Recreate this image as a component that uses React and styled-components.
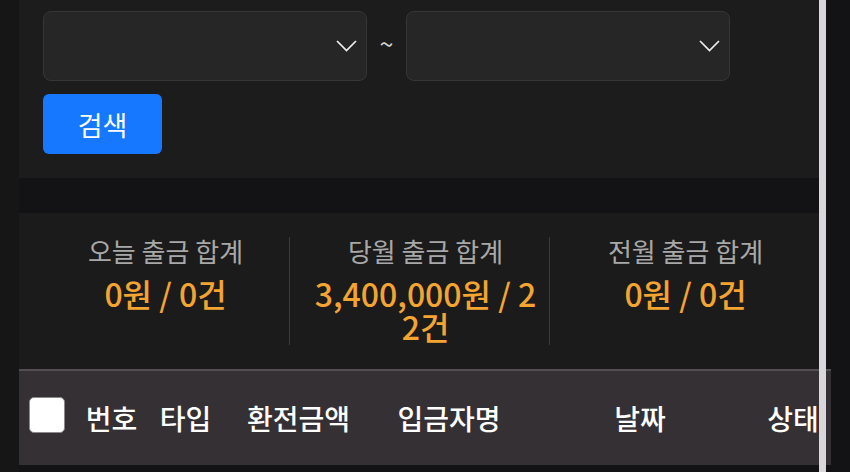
import React from "react";
import styled, { createGlobalStyle } from "styled-components";

const GlobalStyle = createGlobalStyle`
  body {
    margin: 0;
    background: #131214;
    font-family: "Noto Sans CJK KR", "Noto Sans", sans-serif;
    overflow: hidden;
  }
`;

const stats = [
  { label: "오늘 출금 합계", value: "0원 / 0건" },
  { label: "당월 출금 합계", value: "3,400,000원 / 22건" },
  { label: "전월 출금 합계", value: "0원 / 0건" },
];

const columns = [
  { title: "번호", width: 75 },
  { title: "타입", width: 73 },
  { title: "환전금액", width: 153 },
  { title: "입금자명", width: 148 },
  { title: "날짜", width: 234 },
  { title: "상태", width: 72 },
];

const Chevron = () => (
  <svg width="21" height="12" viewBox="0 0 21 12">
    <polyline points="1,1 10.5,10.5 20,1" fill="none" stroke="#eeeeee" strokeWidth="1.7" />
  </svg>
);

const App = () => {
  return (
    <Page>
      <GlobalStyle />
      <Rail />
      <Main>
        <FilterPanel>
          <SelectRow>
            <SelectBox>
              <Chevron />
            </SelectBox>
            <Tilde>~</Tilde>
            <SelectBox>
              <Chevron />
            </SelectBox>
          </SelectRow>
          <SearchButton>검색</SearchButton>
        </FilterPanel>

        <StatsPanel>
          {stats.map((s, i) => (
            <StatCol key={s.label} $first={i === 0}>
              <StatLabel>{s.label}</StatLabel>
              <StatValue>{s.value}</StatValue>
            </StatCol>
          ))}
        </StatsPanel>

        <TableHead>
          <CheckCell>
            <CheckBox />
          </CheckCell>
          {columns.map((c) => (
            <HeadCell key={c.title} $width={c.width}>
              {c.title}
            </HeadCell>
          ))}
        </TableHead>
      </Main>
      <ScrollBar />
    </Page>
  );
};

const Page = styled.div`
  display: flex;
  min-height: 472px;
`;

const Rail = styled.div`
  width: 19px;
  flex-shrink: 0;
  background: #161616;
`;

const Main = styled.div`
  width: 812px;
  display: flex;
  flex-direction: column;
`;

const FilterPanel = styled.section`
  width: 800px;
  box-sizing: border-box;
  padding: 11px 24px 24px;
  background: #1c1c1c;
  display: flex;
  flex-direction: column;
  align-items: flex-start;
  gap: 13px;
`;

const SelectRow = styled.div`
  display: flex;
  align-items: center;
  gap: 12px;
`;

const SelectBox = styled.div`
  width: 324px;
  height: 70px;
  box-sizing: border-box;
  background: #262626;
  border: 1px solid #363636;
  border-radius: 8px;
  display: flex;
  align-items: center;
  justify-content: flex-end;
  padding: 0 9px 0 0;
`;

const Tilde = styled.span`
  width: 15px;
  text-align: center;
  color: #d0d0d0;
  font-size: 25px;
  line-height: 1;
  margin-top: -6px;
`;

const SearchButton = styled.button`
  width: 119px;
  height: 60px;
  border: none;
  border-radius: 6px;
  background: #1677ff;
  color: #ffffff;
  font-family: inherit;
  font-size: 27px;
  font-weight: 400;
  padding: 0;
`;

const StatsPanel = styled.section`
  margin-top: 35px;
  width: 800px;
  box-sizing: border-box;
  padding: 24px 10px 24px;
  background: #1b1b1b;
  display: grid;
  grid-template-columns: repeat(3, 260px);
`;

const StatCol = styled.div`
  border-left: 1px solid ${(props) => (props.$first ? "transparent" : "#3a3a3e")};
  padding: 0 0 2px 12px;
  display: flex;
  flex-direction: column;
  align-items: center;
  text-align: center;
`;

const StatLabel = styled.div`
  font-size: 26px;
  line-height: 28px;
  color: #a8a8a8;
`;

const StatValue = styled.div`
  margin-top: 12px;
  max-width: 226px;
  font-size: 32px;
  line-height: 33px;
  font-weight: 500;
  color: #f3a431;
  word-break: break-all;
`;

const TableHead = styled.div`
  width: 812px;
  height: 96px;
  box-sizing: border-box;
  border-top: 2px solid #524e52;
  background: #343033;
  display: flex;
  align-items: center;
`;

const CheckCell = styled.div`
  width: 55px;
  padding-left: 10px;
  margin-bottom: 6px;
  box-sizing: border-box;
  display: flex;
  align-items: center;
`;

const CheckBox = styled.div`
  width: 36px;
  height: 36px;
  box-sizing: border-box;
  background: #ffffff;
  border: 1px solid #8a8a8a;
  border-radius: 5px;
`;

const HeadCell = styled.div`
  width: ${(props) => props.$width}px;
  flex-shrink: 0;
  text-align: center;
  color: #ffffff;
  font-size: 28px;
  font-weight: 500;
  white-space: nowrap;
`;

const ScrollBar = styled.div`
  position: fixed;
  left: 819px;
  top: 0;
  bottom: 0;
  width: 7px;
  background: #d9d7db;
`;

export default App;
